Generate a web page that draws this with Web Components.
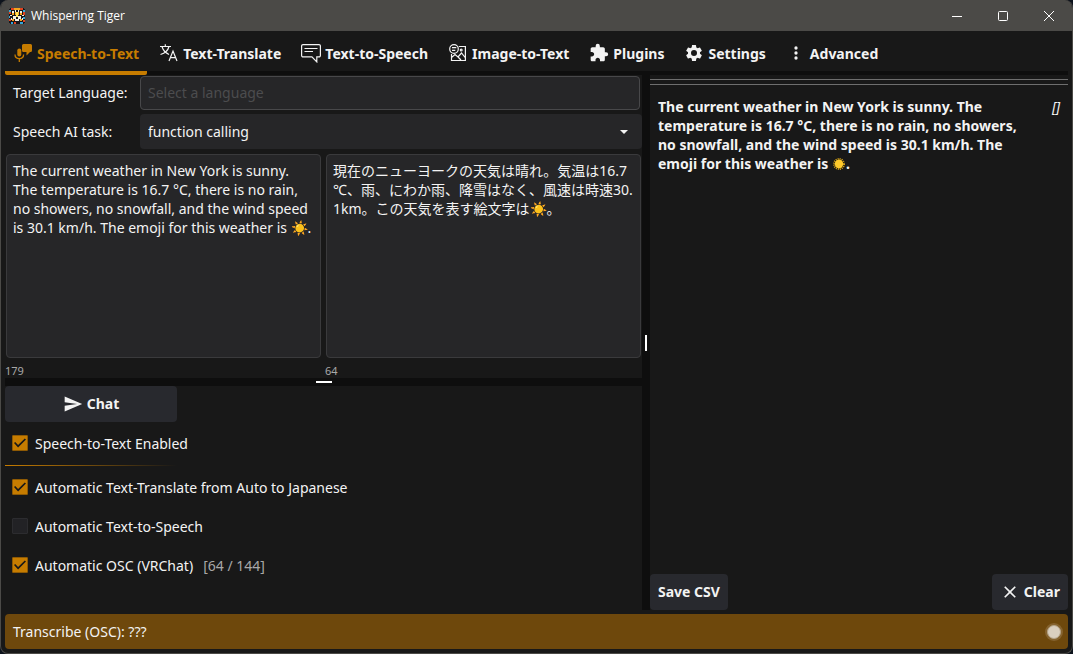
<!DOCTYPE html>
<html lang="en">
<head>
<meta charset="utf-8">
<title>Whispering Tiger</title>
<style>
:root{
  --chrome:#4b4a47; --bg:#181818; --line:#0e0e0e; --field:#262628; --field-border:#3a3a3c;
  --button:#28292e; --accent:#c67c00; --fg:#f3f3f3; --muted:#a8a8a8;
}
html,body{height:100%}
body{margin:0;background:#0d131c;color:var(--fg);font:14px/19px "Noto Sans","Noto Sans CJK JP",sans-serif}
</style>
</head>
<body>
<wt-window>
  <wt-titlebar slot="title">Whispering Tiger</wt-titlebar>
  <wt-tabs slot="tabs">
    <wt-tab icon="speech" active>Speech-to-Text</wt-tab>
    <wt-tab icon="translate">Text-Translate</wt-tab>
    <wt-tab icon="bubble">Text-to-Speech</wt-tab>
    <wt-tab icon="image">Image-to-Text</wt-tab>
    <wt-tab icon="plugin">Plugins</wt-tab>
    <wt-tab icon="gear">Settings</wt-tab>
    <wt-tab icon="dots">Advanced</wt-tab>
  </wt-tabs>
  <wt-speech-panel slot="left"></wt-speech-panel>
  <wt-history slot="right">
    <wt-entry>The current weather in New York is sunny. The temperature is 16.7 °C, there is no rain, no showers, no snowfall, and the wind speed is 30.1 km/h. The emoji for this weather is <wt-icon name="sun"></wt-icon>.</wt-entry>
  </wt-history>
  <wt-status slot="status">Transcribe (OSC): ???</wt-status>
</wt-window>

<script>
const ICONS = {
  speech:'<svg viewBox="0 0 20 20" fill="currentColor"><path d="M10.500 1h7A1.500 1.500 0 0 1 19 2.500v5A1.500 1.500 0 0 1 17.500 9H17l-3.500 3.500V9h-3A1.500 1.500 0 0 1 9 7.500v-5A1.500 1.500 0 0 1 10.500 1z"/><rect x="4.300" y="5.500" width="4" height="8" rx="2"/><path d="M2 11.500c0 5.500 8.600 5.500 8.600 0M6.300 15.500V19" fill="none" stroke="currentColor" stroke-width="1.300"/></svg>',
  translate:'<svg viewBox="0 0 20 20" fill="none" stroke="currentColor" stroke-width="1.200"><path d="M1 3.500h11M6.300 1.300v2.200M3 3.500c1 4 4 6.500 7 8M10 3.500C9 7.500 5 10.500 1.500 11.500M10 18l4-10 4 10M11.400 14.700h5.200"/></svg>',
  bubble:'<svg viewBox="0 0 20 20" fill="none" stroke="currentColor" stroke-width="1.200"><path d="M2 1.600h16a1.400 1.400 0 0 1 1.400 1.400v9.500a1.400 1.400 0 0 1-1.400 1.400h-2.200v5l-4.900-5H2A1.400 1.400 0 0 1 .6 12.500V3A1.400 1.400 0 0 1 2 1.600z"/><path d="M3.500 5.500h13M3.500 8.500h8.500" stroke-width="1"/></svg>',
  image:'<svg viewBox="0 0 20 20" fill="none" stroke="currentColor" stroke-width="1.200"><circle cx="6" cy="6" r="4.300"/><path d="M4 4.700h4.300M4 7.300h3.300M10.800 3.500h6.600v14H3.500V11M3.500 14.500l3.500-3 3 2.500 3.500-4 4 5M10 14l3 3"/><circle cx="13.200" cy="7" r=".9"/></svg>',
  plugin:'<svg viewBox="0 0 24 24" fill="currentColor"><path d="M20.500 11H19V7c0-1.100-.9-2-2-2h-4V3.500a2.500 2.500 0 0 0-5 0V5H4c-1.100 0-1.990.9-1.990 2v3.800H3.500c1.490 0 2.700 1.210 2.700 2.700s-1.210 2.700-2.700 2.700H2V20c0 1.100.9 2 2 2h3.800v-1.500c0-1.490 1.210-2.700 2.700-2.700s2.700 1.210 2.700 2.700V22H17c1.100 0 2-.9 2-2v-4h1.500a2.500 2.500 0 0 0 0-5z"/></svg>',
  gear:'<svg viewBox="0 0 24 24" fill="currentColor"><path d="M19.140 12.940c.04-.3.060-.61.060-.94 0-.32-.02-.64-.07-.94l2.030-1.580a.49.49 0 0 0 .12-.61l-1.920-3.320a.488.488 0 0 0-.59-.22l-2.390.96c-.5-.38-1.030-.7-1.620-.94l-.36-2.540a.484.484 0 0 0-.48-.41h-3.840c-.24 0-.43.170-.47.410l-.36 2.540c-.59.240-1.130.570-1.620.940l-2.390-.96c-.22-.08-.47 0-.59.220L2.740 8.870c-.12.210-.08.470.120.610l2.030 1.580c-.05.300-.09.630-.09.940s.02.640.070.940l-2.030 1.580a.49.490 0 0 0-.12.610l1.920 3.320c.12.220.370.290.590.220l2.390-.96c.500.380 1.030.700 1.620.940l.36 2.540c.05.240.240.410.480.410h3.840c.24 0 .44-.17.470-.41l.36-2.540c.59-.24 1.130-.56 1.620-.94l2.390.96c.22.080.47 0 .59-.22l1.920-3.320c.12-.22.070-.47-.12-.61l-2.010-1.580zM12 15.600A3.600 3.600 0 1 1 12 8.400a3.600 3.600 0 0 1 0 7.200z"/></svg>',
  dots:'<svg viewBox="0 0 24 24" fill="currentColor"><circle cx="12" cy="6" r="2"/><circle cx="12" cy="12" r="2"/><circle cx="12" cy="18" r="2"/></svg>',
  send:'<svg viewBox="0 0 24 24" fill="currentColor"><path d="M2.010 21 23 12 2.010 3 2 10l15 2-15 2z"/></svg>',
  close:'<svg viewBox="0 0 24 24" fill="currentColor"><path d="M19 6.410 17.590 5 12 10.590 6.410 5 5 6.410 10.590 12 5 17.590 6.410 19 12 13.410 17.590 19 19 17.590 13.410 12z"/></svg>',
  sun:'<svg viewBox="0 0 14 14"><circle cx="7" cy="7" r="5" fill="none" stroke="#d9a514" stroke-width="2" stroke-dasharray="1 .963"/><circle cx="7" cy="7" r="4.200" fill="#fdc92b"/></svg>',
  tiger:'<svg viewBox="0 0 16 16" shape-rendering="crispEdges"><rect width="16" height="16" rx="3" fill="#15151a"/><path fill="#f3efe2" d="M3 3h2v2H3zM11 3h2v2h-2zM4 8h3v3H4zM9 8h3v3H9zM6 11h4v2H6zM1 7h2v1H1zM13 7h2v1h-2zM2 10h1v2H2zM13 10h1v2h-1zM6 2h1v2H6zM9 2h1v2H9z"/><path fill="#e2431f" d="M2 0h3v2H2zM11 0h3v2h-3zM0 4h2v2H0zM14 4h2v3h-2zM0 11h2v2H0zM14 12h2v2h-2zM5 14h2v2H5z"/><path fill="#35a7d8" d="M0 2h2v2H0zM14 2h2v2h-2zM0 8h1v2H0zM14 9h2v2h-2zM2 14h2v2H2zM11 14h3v2h-3z"/><path fill="#f6a51d" d="M5 0h6v2H5zM3 5h2v2H3zM11 5h2v2h-2zM6 4h4v3H6zM3 11h2v2H3zM11 11h2v2h-2z"/><path fill="#ffe45b" d="M7 4h2v5H7z"/></svg>'
};
function define(name, html, setup){
  const t = document.createElement('template');
  t.innerHTML = html;
  customElements.define(name, class extends HTMLElement{
    constructor(){ super(); this.attachShadow({mode:'open'}).append(t.content.cloneNode(true)); }
    connectedCallback(){ if(setup) setup(this, this.shadowRoot); }
  });
}

define('wt-icon', `<style>
:host{display:inline-block;flex:none;width:var(--icon-size,20px);height:var(--icon-size,20px)}
:host([name=sun]){width:14px;height:14px;vertical-align:-2px}
svg{display:block;width:100%;height:100%}
</style><span></span>`, (el, root) => { root.querySelector('span').innerHTML = ICONS[el.getAttribute('name')]; });

define('wt-window', `<style>
:host{display:flex;flex-direction:column;box-sizing:border-box;min-height:100vh;border:1px solid var(--chrome);border-top:0;border-radius:8px;overflow:hidden;background:var(--bg)}
main{flex:1;display:flex;flex-direction:column;padding:0 4px 4px}
.split{flex:1;display:grid;grid-template-columns:637fr 8px 418fr;margin-bottom:4px}
.divider{background:var(--line);display:grid;place-items:center}
.divider i{width:2px;height:16px;background:#fff}
.pane{display:grid;min-width:0}
</style>
<slot name="title"></slot>
<main>
  <slot name="tabs"></slot>
  <div class="split">
    <div class="pane"><slot name="left"></slot></div>
    <div class="divider"><i></i></div>
    <div class="pane"><slot name="right"></slot></div>
  </div>
  <slot name="status"></slot>
</main>`);

define('wt-titlebar', `<style>
:host{display:flex;align-items:center;height:31px;background:var(--chrome);color:#fff;font:12px/16px "Open Sans",sans-serif;--icon-size:16px}
wt-icon{margin:0 6px 0 8px}
.name{flex:1}
button{width:46px;height:31px;padding:0;border:0;background:none;color:inherit;display:grid;place-items:center}
svg{width:12px;height:12px;fill:none;stroke:currentColor}
</style>
<wt-icon name="tiger"></wt-icon><span class="name"><slot></slot></span>
<button aria-label="Minimize"><svg viewBox="0 0 12 12"><path d="M1 6.500h10"/></svg></button>
<button aria-label="Maximize"><svg viewBox="0 0 12 12"><rect x="1.500" y="1.500" width="9" height="9" rx="1"/></svg></button>
<button aria-label="Close"><svg viewBox="0 0 12 12"><path d="M1 1l10 10M11 1L1 11"/></svg></button>`);

define('wt-tabs', `<style>
:host{display:flex;gap:4px;height:44px;background:linear-gradient(var(--line),var(--line)) bottom/100% 4px no-repeat}
</style><slot></slot>`);

define('wt-tab', `<style>
:host{display:flex}
button{display:flex;align-items:center;gap:4px;padding:4px 8px 0;border:0;border-bottom:4px solid transparent;background:none;color:inherit;font:inherit;font-weight:700;white-space:nowrap}
:host([active]) button{color:var(--accent)}
:host([active]){background:linear-gradient(var(--accent),var(--accent)) bottom/100% 4px no-repeat;border-radius:0 0 2px 2px}
</style><button role="tab"><wt-icon></wt-icon><slot></slot></button>`,
(el, root) => {
  const i = document.createElement('wt-icon');
  i.setAttribute('name', el.getAttribute('icon'));
  root.querySelector('wt-icon').replaceWith(i);
});

define('wt-button', `<style>
:host{display:inline-flex}
button{flex:1;display:flex;align-items:center;justify-content:center;gap:4px;height:36px;padding:0 8px 1px;border:0;border-radius:4px;background:var(--button);color:inherit;font:inherit;font-weight:700}
</style><button><slot></slot></button>`);

define('wt-check', `<style>
:host{display:block}
label{display:flex;align-items:center;gap:7px;height:35px;padding-left:7px}
input{appearance:none;box-sizing:border-box;width:16px;height:16px;margin:0 0 1px;border:1px solid #2c2c2f;border-radius:1px;background:#222225;display:grid;place-items:center}
input:checked{background:var(--accent);border-color:#8f5a04}
input:checked::before{content:"";width:12px;height:10px;background:#181818;clip-path:polygon(0 50%,10% 40%,34% 70%,90% 5%,100% 15%,34% 94%)}
::slotted(small){font-size:14px;color:var(--muted);margin-left:10px}
</style><label><input type="checkbox"><span><slot></slot></span></label>`,
(el, root) => { root.querySelector('input').checked = el.hasAttribute('checked'); });

define('wt-textbox', `<style>
:host{display:flex;flex-direction:column;min-width:0;position:relative}
textarea{flex:1;box-sizing:border-box;width:100%;margin:0;padding:6px;border:1px solid var(--field-border);border-radius:4px;background:var(--field);color:inherit;font:inherit;resize:none;outline:0;overflow:hidden}
:host([cjk]) textarea{line-break:anywhere}
output{display:block;font-size:11px;line-height:15px;color:var(--muted);margin:5px 0 0 -1px}
</style><textarea></textarea><output></output>`,
(el, root) => {
  const t = root.querySelector('textarea');
  t.value = el.getAttribute('value');
  t.setAttribute('aria-label', el.getAttribute('label'));
  root.querySelector('output').textContent = el.getAttribute('count');
});

define('wt-speech-panel', `<style>
:host{display:flex;flex-direction:column;min-width:0}
.form{display:grid;grid-template-columns:127px 1fr;row-gap:4px;column-gap:8px;align-items:center;padding-top:1px}
label{padding:0 0 1px 8px}
.wrap{position:relative;display:grid}
input,select{box-sizing:border-box;width:100%;height:35px;margin:0;padding:0 7px;border:1px solid transparent;border-radius:4px;background:var(--field);color:inherit;font:inherit;appearance:none;outline:0}
input{height:34px;padding-bottom:1px;border-color:#48484a;width:calc(100% - 2px)}
input::placeholder{color:#4c4c4e;opacity:1}
.wrap::after{content:"";position:absolute;right:14px;top:16px;border:4px solid transparent;border-top-color:currentColor;border-bottom:0}
.boxes{display:grid;grid-template-columns:1fr 1fr;gap:5px;height:224px;margin:5px 1px 0}
.bar{height:8px;background:var(--line);display:grid;place-items:center}
.bar i{width:16px;height:2px;background:#fff}
wt-button{width:172px;margin-bottom:4px}
hr{width:172px;height:1px;margin:4px 0;border:0;background:linear-gradient(90deg,var(--accent),transparent)}
.checks{display:grid;gap:4px}
</style>
<div class="form">
  <label for="lang">Target Language:</label><input id="lang" placeholder="Select a language">
  <label for="task">Speech AI task:</label><span class="wrap"><select id="task"><option>function calling</option></select></span>
</div>
<div class="boxes">
  <wt-textbox label="Transcription" count="179" value="The current weather in New York is sunny. The temperature is 16.7 °C, there is no rain, no showers, no snowfall, and the wind speed is 30.1 km/h. The emoji for this weather is ☀️."></wt-textbox>
  <wt-textbox label="Translation" cjk count="64" value="現在のニューヨークの天気は晴れ。気温は16.7℃、雨、にわか雨、降雪はなく、風速は時速30.1km。この天気を表す絵文字は☀️。"></wt-textbox>
</div>
<div class="bar"><i></i></div>
<wt-button><wt-icon name="send"></wt-icon>Chat</wt-button>
<wt-check checked>Speech-to-Text Enabled</wt-check>
<hr>
<div class="checks">
  <wt-check checked>Automatic Text-Translate from Auto to Japanese</wt-check>
  <wt-check>Automatic Text-to-Speech</wt-check>
  <wt-check checked>Automatic OSC (VRChat)<small>[64 / 144]</small></wt-check>
</div>`);

define('wt-history', `<style>
:host{display:flex;flex-direction:column;min-width:0}
.rules{height:4px;margin-top:4px;border:solid #6e6e6e;border-width:1px 0}
.list{flex:1;padding:12px 8px}
footer{display:flex;justify-content:space-between}
</style>
<div class="rules"></div>
<div class="list"><slot></slot></div>
<footer><wt-button>Save CSV</wt-button><wt-button><wt-icon name="close"></wt-icon>Clear</wt-button></footer>`);

define('wt-entry', `<style>
:host{display:flex;justify-content:space-between;gap:24px}
p{margin:0;font-weight:700;max-width:368px}
em{font-style:italic}
</style><p><slot></slot></p><em>[]</em>`);

define('wt-status', `<style>
:host{display:flex;align-items:center;justify-content:space-between;height:35px;padding:0 7px 0 8px;border-radius:4px;background:#6e480c}
i{width:12px;height:12px;border-radius:50%;background:#d9cfc0;border:1px solid #b3a287;box-shadow:0 0 0 2px #85632f}
</style><slot></slot><i></i>`);
</script>
</body>
</html>
